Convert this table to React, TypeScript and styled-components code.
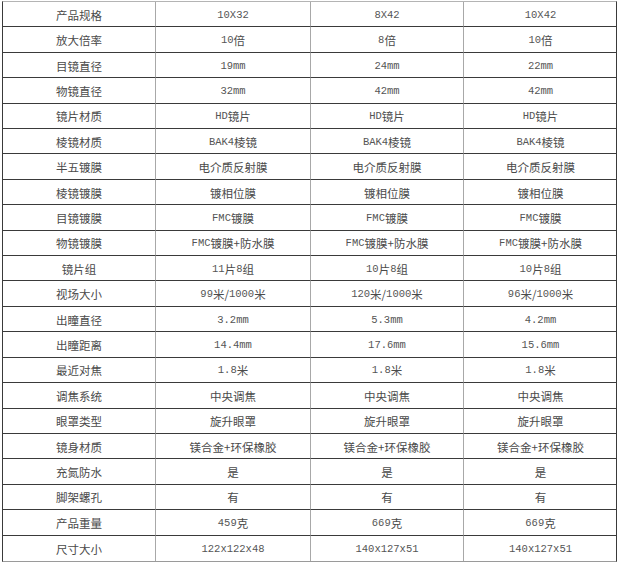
import styled, { createGlobalStyle } from "styled-components";

const GlobalStyle = createGlobalStyle`
  html, body {
    margin: 0;
    padding: 0;
    background: #ffffff;
  }
  body {
    font-family: "Noto Sans CJK SC", "DejaVu Sans", sans-serif;
  }
`;

const Page = styled.div`
  padding: 1px 0 0 2px;
  width: 620px;
  height: 564px;
  box-sizing: border-box;
`;

const SpecTable = styled.div`
  display: grid;
  grid-template-columns: 153px 155px 153px 153px;
  grid-template-rows: repeat(22, 1fr);
  width: 615px;
  height: 561px;
  box-sizing: border-box;
  border-top: 1px solid #b4b4b4;
  border-left: 1px solid #3a3a3a;
  border-right: 1px solid #3a3a3a;
  border-bottom: 1px solid #9a9a9a;
`;

const Cell = styled.div<{ $last: boolean; $lastRow: boolean }>`
  display: flex;
  align-items: center;
  justify-content: center;
  font-size: 11.5px;
  color: #4a4a4a;
  border-right: ${(p) => (p.$last ? "none" : "1px solid #a8a8a8")};
  border-bottom: ${(p) => (p.$lastRow ? "none" : "1px solid #3a3a3a")};
  white-space: nowrap;
  padding-top: 1px;
`;

// latin part of the text is set in a narrow monospace, like the original
const Latin = styled.span`
  font-family: "Liberation Mono", "DejaVu Sans Mono", monospace;
  font-size: 10.5px;
  color: #555;
`;

const rows: string[][] = [
  ["产品规格", "10X32", "8X42", "10X42"],
  ["放大倍率", "10倍", "8倍", "10倍"],
  ["目镜直径", "19mm", "24mm", "22mm"],
  ["物镜直径", "32mm", "42mm", "42mm"],
  ["镜片材质", "HD镜片", "HD镜片", "HD镜片"],
  ["棱镜材质", "BAK4棱镜", "BAK4棱镜", "BAK4棱镜"],
  ["半五镀膜", "电介质反射膜", "电介质反射膜", "电介质反射膜"],
  ["棱镜镀膜", "镀相位膜", "镀相位膜", "镀相位膜"],
  ["目镜镀膜", "FMC镀膜", "FMC镀膜", "FMC镀膜"],
  ["物镜镀膜", "FMC镀膜+防水膜", "FMC镀膜+防水膜", "FMC镀膜+防水膜"],
  ["镜片组", "11片8组", "10片8组", "10片8组"],
  ["视场大小", "99米/1000米", "120米/1000米", "96米/1000米"],
  ["出瞳直径", "3.2mm", "5.3mm", "4.2mm"],
  ["出瞳距离", "14.4mm", "17.6mm", "15.6mm"],
  ["最近对焦", "1.8米", "1.8米", "1.8米"],
  ["调焦系统", "中央调焦", "中央调焦", "中央调焦"],
  ["眼罩类型", "旋升眼罩", "旋升眼罩", "旋升眼罩"],
  ["镜身材质", "镁合金+环保橡胶", "镁合金+环保橡胶", "镁合金+环保橡胶"],
  ["充氮防水", "是", "是", "是"],
  ["脚架螺孔", "有", "有", "有"],
  ["产品重量", "459克", "669克", "669克"],
  ["尺寸大小", "122x122x48", "140x127x51", "140x127x51"],
];

function renderText(text: string) {
  const parts = text.split(/([A-Za-z0-9.]+)/).filter((p) => p.length > 0);
  return parts.map((p, i) => (/^[A-Za-z0-9.]+$/.test(p) ? <Latin key={i}>{p}</Latin> : <span key={i}>{p}</span>));
}

export default function App() {
  return (
    <>
      <GlobalStyle />
      <Page>
        <SpecTable>
          {rows.map((row, r) =>
            row.map((text, c) => (
              <Cell key={`${r}-${c}`} $last={c === row.length - 1} $lastRow={r === rows.length - 1}>
                {renderText(text)}
              </Cell>
            ))
          )}
        </SpecTable>
      </Page>
    </>
  );
}
